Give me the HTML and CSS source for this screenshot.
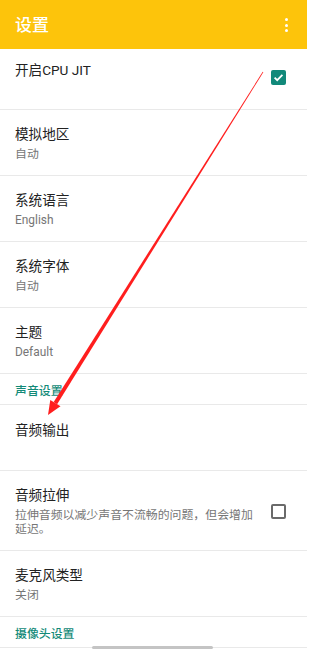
FILE: index.html
```html
<!DOCTYPE html>
<html lang="zh-CN">
<head>
<meta charset="utf-8">
<title>设置</title>
<link rel="stylesheet" href="styles.css">
</head>
<body>
<div class="screen">
  <header class="appbar">
    <span class="appbar-title">设置</span>
    <span class="kebab"><i></i><i></i><i></i></span>
  </header>

  <div class="pref pref-first">
    <div class="pref-text"><div class="pref-title">开启CPU JIT</div></div>
    <span class="cb cb-on cb-raise">
      <svg viewBox="0 0 15 15" width="15" height="15"><path d="M3.6 7.7 L6.2 10.2 L11.4 4.9" fill="none" stroke="#fff" stroke-width="1.8"/></svg>
    </span>
  </div>

  <div class="pref">
    <div class="pref-text">
      <div class="pref-title">模拟地区</div>
      <div class="pref-summary">自动</div>
    </div>
  </div>

  <div class="pref">
    <div class="pref-text">
      <div class="pref-title">系统语言</div>
      <div class="pref-summary">English</div>
    </div>
  </div>

  <div class="pref">
    <div class="pref-text">
      <div class="pref-title">系统字体</div>
      <div class="pref-summary">自动</div>
    </div>
  </div>

  <div class="pref">
    <div class="pref-text">
      <div class="pref-title">主题</div>
      <div class="pref-summary">Default</div>
    </div>
  </div>

  <div class="category">声音设置</div>

  <div class="pref pref-single">
    <div class="pref-text"><div class="pref-title">音频输出</div></div>
  </div>

  <div class="pref">
    <div class="pref-text">
      <div class="pref-title">音频拉伸</div>
      <div class="pref-summary">拉伸音频以减少声音不流畅的问题，但会增加延迟。</div>
    </div>
    <span class="cb"></span>
  </div>

  <div class="pref">
    <div class="pref-text">
      <div class="pref-title">麦克风类型</div>
      <div class="pref-summary">关闭</div>
    </div>
  </div>

  <div class="category">摄像头设置</div>

  <div class="gesture-bar"></div>

  <svg class="arrow" viewBox="0 0 307 651" width="307" height="651">
    <polygon fill="#ff1e1e" points="263.3,72.2 262.7,71.8 53.7,402.0 57.1,404.2"/>
    <polygon fill="#ff1e1e" points="48,415 60.5,406.3 50.3,399.9"/>
  </svg>
</div>
</body>
</html>
```

FILE: styles.css
```css
* { box-sizing: border-box; }

html, body {
  margin: 0;
  padding: 0;
  background: #fff;
}

body {
  font-family: Roboto, "Noto Sans CJK SC", sans-serif;
  color: #212121;
}

.screen {
  position: relative;
  width: 307px;
  height: 651px;
  overflow: hidden;
  background: #fff;
}

.appbar {
  height: 49px;
  background: #fdc40b;
  display: flex;
  align-items: center;
  justify-content: space-between;
  padding: 0 19px 0 15px;
}

.appbar-title {
  color: #fff;
  font-size: 17px;
  line-height: 20px;
  font-weight: 500;
}

.kebab {
  display: flex;
  flex-direction: column;
  gap: 2.5px;
  align-items: center;
  margin-top: 1px;
}

.kebab i {
  display: block;
  width: 3px;
  height: 3px;
  border-radius: 50%;
  background: #fff;
}

.pref {
  display: flex;
  align-items: center;
  justify-content: space-between;
  min-height: 65px;
  padding: 15px 21px 14px 15px;
  border-bottom: 1px solid #e9e9e9;
}

.pref-first {
  min-height: 61px;
  height: 61px;
  align-items: flex-start;
  padding-top: 12px;
}

.pref-single {
  height: 66px;
  align-items: flex-start;
  padding-top: 16px;
}

.pref-text {
  flex: 1;
  min-width: 0;
  padding-right: 10px;
}

.pref-title {
  font-size: 13.6px;
  line-height: 18px;
  color: #222;
}

.pref-summary {
  margin-top: 4px;
  font-size: 11.9px;
  line-height: 14px;
  color: #767676;
}

.cb {
  flex: none;
  width: 15px;
  height: 15px;
  border: 2px solid #6a6a6a;
  border-radius: 2px;
  display: flex;
  align-items: center;
  justify-content: center;
}

.cb-on {
  border: none;
  background: #11897a;
}

.cb-raise {
  margin-top: 9px;
}

.category {
  height: 31px;
  padding: 0 15px;
  display: flex;
  align-items: center;
  font-size: 11.9px;
  font-weight: 500;
  color: #138a78;
  border-bottom: 1px solid #e9e9e9;
}

.gesture-bar {
  position: absolute;
  left: 92px;
  top: 646px;
  width: 121px;
  height: 3px;
  border-radius: 2px;
  background: #c4c4c4;
}

.arrow {
  position: absolute;
  left: 0;
  top: 0;
  pointer-events: none;
}
```
